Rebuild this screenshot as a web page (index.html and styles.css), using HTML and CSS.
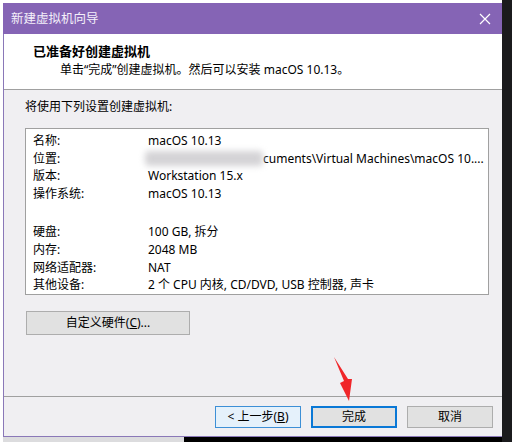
FILE: index.html
```html
<!DOCTYPE html>
<html lang="zh-CN">
<head>
<meta charset="utf-8">
<link rel="stylesheet" href="styles.css">
</head>
<body>
<div class="screen">
  <div class="left">
    <div class="window">
      <div class="titlebar">
        <span class="title">新建虚拟机向导</span>
        <svg class="close" width="12" height="12" viewBox="0 0 12 12"><path d="M1 1L11 11M11 1L1 11" stroke="#fff" stroke-width="1.2" fill="none"/></svg>
      </div>
      <div class="header">
        <div class="h-title">已准备好创建虚拟机</div>
        <div class="h-sub">单击“完成”创建虚拟机。然后可以安装 macOS 10.13。</div>
      </div>
      <div class="body">
        <div class="intro">将使用下列设置创建虚拟机:</div>
        <div class="box">
          <div class="group">
            <div class="row"><span class="k">名称:</span><span class="v">macOS 10.13</span></div>
            <div class="row"><span class="k">位置:</span><span class="v loc"><span class="blur"></span>cuments\Virtual Machines\macOS 10....</span></div>
            <div class="row"><span class="k">版本:</span><span class="v">Workstation 15.x</span></div>
            <div class="row"><span class="k">操作系统:</span><span class="v">macOS 10.13</span></div>
          </div>
          <div class="group g2">
            <div class="row"><span class="k">硬盘:</span><span class="v">100 GB, 拆分</span></div>
            <div class="row"><span class="k">内存:</span><span class="v">2048 MB</span></div>
            <div class="row"><span class="k">网络适配器:</span><span class="v">NAT</span></div>
            <div class="row"><span class="k">其他设备:</span><span class="v">2 个 CPU 内核, CD/DVD, USB 控制器, 声卡</span></div>
          </div>
        </div>
        <div class="custom-row"><button class="btn custom">自定义硬件(<u>C</u>)...</button></div>
      </div>
      <div class="footer">
        <button class="btn back">&lt; 上一步(<u>B</u>)</button>
        <button class="btn finish">完成</button>
        <button class="btn cancel">取消</button>
      </div>
      <svg class="arrow" width="30" height="50" viewBox="0 0 30 50"><path d="M2 2 L12 26 L8 28 L17 46 L20 24 L16 24 Z" fill="#f0262a"/></svg>
    </div>
    <div class="below"><span class="b1"></span><span class="b2"></span></div>
  </div>
  <div class="right-strip"></div>
</div>
</body>
</html>
```
FILE: styles.css
```css
html, body { margin: 0; padding: 0; }
body {
  width: 512px; height: 442px; overflow: hidden; background: #ffffff;
  font-family: "Noto Sans", "Noto Sans CJK SC", sans-serif;
  font-size: 12px; color: #000;
}
.screen { display: flex; height: 442px; }
.left { width: 502px; padding: 3px 0 0 3px; box-sizing: border-box; display: flex; flex-direction: column; }
.right-strip { width: 10px; background: #1b1b1d; }
.window {
  position: relative;
  height: 434px; box-sizing: border-box;
  border-left: 1px solid #8a78b8; border-bottom: 1px solid #8a78b8;
  background: #f0eff2; display: flex; flex-direction: column;
}
.titlebar {
  height: 31px; background: #8564b5; display: flex; align-items: center;
  justify-content: space-between; padding: 0 10px 0 8px; margin-left: -1px;
}
.title { color: #f4f0fa; font-size: 12.5px; line-height: 16px; }
.close { display: block; margin-right: 1px; }
.header {
  height: 56px; background: #fff; border-bottom: 1px solid #a0a0a0; box-sizing: border-box;
  padding: 8px 0 0 29px;
}
.h-title { font-weight: bold; font-size: 13px; line-height: 18px; }
.h-sub { font-size: 12px; line-height: 18px; padding-left: 27px; margin-top: 1px; }
.body { padding: 9px 0 0 21px; flex: 1; }
.intro { line-height: 16px; }
.box {
  margin-top: 13px; width: 464px; height: 167px; box-sizing: border-box;
  background: #fff; border: 1px solid #a0a0a0; padding: 3px 0 0 7px;
}
.row { display: flex; height: 17.7px; line-height: 17.7px; white-space: nowrap; }
.k { width: 115px; }
.g2 { margin-top: 20.5px; }
.loc { position: relative; padding-left: 115px; }
.blur {
  position: absolute; left: -3px; top: 1px; width: 118px; height: 15px;
  background: #d4d3d6; filter: blur(3px); border-radius: 4px;
}
.custom-row { margin-top: 16px; }
.btn {
  font-family: inherit; font-size: 12px; color: #000; margin: 0; padding: 0;
  background: #e1e1e1; border: 1px solid #adadad; box-sizing: border-box; line-height: 18px;
}
.custom { width: 164px; height: 24px; margin-left: 1px; }
.footer {
  height: 39px; border-top: 1px solid #a0a0a0; display: flex; justify-content: flex-end;
  gap: 10px; padding: 9px 9px 0 0; box-sizing: border-box; margin-bottom: 1px;
}
.footer .btn { width: 86px; height: 22px; }
.back { background: #e5f1fb; border-color: #3d8fd6; }
.finish { border: 2px solid #0a78d6; }
.arrow { position: absolute; left: 328px; top: 352px; }
.below { flex: 1; display: flex; }
.b1 { width: 181px; background: #dcdcde; }
.b2 { flex: 1; background: #000; }
```
